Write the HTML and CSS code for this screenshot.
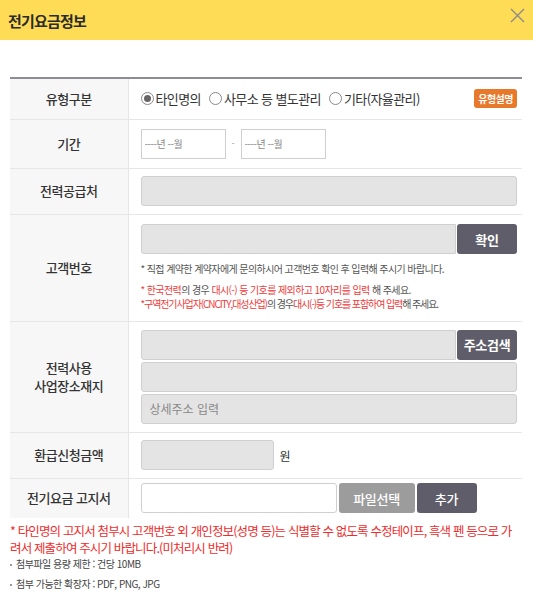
FILE: index.html
```html
<!DOCTYPE html>
<html lang="ko">
<head>
  <meta charset="UTF-8" />
  <meta name="viewport" content="width=device-width, initial-scale=1.0"/>
  <title>전기요금정보</title>
  <link rel="stylesheet" href="styles.css">
</head>
<body>

<!-- Popup header -->
<div class="pop-head">
  <h1>전기요금정보</h1>
  <button class="btn-close" type="button" aria-label="닫기">
    <svg width="15" height="15" viewBox="0 0 15 15"><path d="M1 1L14 14M14 1L1 14" stroke="#8a8a8a" stroke-width="1.4" fill="none"/></svg>
  </button>
</div>

<div class="pop-body">
  <table class="form-table">
    <colgroup>
      <col class="col-th">
      <col>
    </colgroup>
    <tr class="row-type">
      <th>유형구분</th>
      <td>
        <div class="type-line">
          <label class="radio"><span class="dot checked"></span>타인명의</label>
          <label class="radio"><span class="dot"></span>사무소 등 별도관리</label>
          <label class="radio"><span class="dot"></span>기타(자율관리)</label>
          <a class="badge" href="#">유형설명</a>
        </div>
      </td>
    </tr>
    <tr class="row-period">
      <th>기간</th>
      <td>
        <div class="period">
          <input class="inp-date" type="text" placeholder="----년 --월">
          <span class="sep">-</span>
          <input class="inp-date" type="text" placeholder="----년 --월">
        </div>
      </td>
    </tr>
    <tr class="row-std">
      <th>전력공급처</th>
      <td><input class="inp gray" type="text" readonly></td>
    </tr>
    <tr class="row-cust">
      <th>고객번호</th>
      <td>
        <div class="inp-btn">
          <input class="inp gray" type="text">
          <button class="btn dark" type="button">확인</button>
        </div>
        <p class="help">* 직접 계약한 계약자에게 문의하시어 고객번호 확인 후 입력해 주시기 바랍니다.</p>
        <p class="help first-red"><em>* 한국전력</em>의 경우 <em>대시(-) 등 기호를 제외하고 10자리를 입력</em> 해 주세요.</p>
        <p class="help tight"><em>*구역전기사업자(CNCITY,대성산업)</em>의 경우<em>대시(-)등 기호를 포함하여 입력</em>해 주세요.</p>
      </td>
    </tr>
    <tr class="row-addr">
      <th>전력사용<br>사업장소재지</th>
      <td>
        <div class="addr">
          <div class="inp-btn">
            <input class="inp gray" type="text" readonly>
            <button class="btn dark" type="button">주소검색</button>
          </div>
          <input class="inp gray" type="text" readonly>
          <input class="inp gray" type="text" placeholder="상세주소 입력">
        </div>
      </td>
    </tr>
    <tr class="row-std">
      <th>환급신청금액</th>
      <td>
        <div class="amount">
          <input class="inp gray short" type="text" readonly>
          <span>원</span>
        </div>
      </td>
    </tr>
    <tr class="row-file">
      <th>전기요금 고지서</th>
      <td>
        <div class="file">
          <input class="inp white" type="text" readonly>
          <button class="btn light" type="button">파일선택</button>
          <button class="btn dark add" type="button">추가</button>
        </div>
      </td>
    </tr>
  </table>

  <p class="warn">* 타인명의 고지서 첨부시 고객번호 외 개인정보(성명 등)는 식별할 수 없도록 수정테이프, 흑색 펜 등으로 가려서 제출하여 주시기 바랍니다.(미처리시 반려)</p>
  <ul class="notes">
    <li>첨부파일 용량 제한 : 건당 10MB</li>
    <li>첨부 가능한 확장자 : PDF, PNG, JPG</li>
  </ul>
</div>

</body>
</html>
```

FILE: styles.css
```css
* {
  box-sizing: border-box;
}
body {
  margin: 0;
  font-family: "Noto Sans CJK KR", "Noto Sans", sans-serif;
  color: #333;
  background: #fff;
}

/* header */
.pop-head {
  height: 40px;
  background: #ffdc55;
  display: flex;
  align-items: center;
  justify-content: space-between;
  padding: 0 8px 0 8px;
}
.pop-head h1 {
  margin: 0;
  font-size: 15px;
  font-weight: 700;
  letter-spacing: -0.8px;
  color: #2b2b2b;
}
.btn-close {
  border: none;
  background: none;
  padding: 0;
  width: 16px;
  height: 16px;
  margin-top: -8px;
  cursor: pointer;
}

.pop-body {
  padding: 37px 11px 0 10px;
}

/* form table */
.form-table {
  width: 512px;
  border-collapse: collapse;
  border-top: 2px solid #8c8c94;
}
.col-th {
  width: 118px;
}
.form-table th {
  background: #f7f7f7;
  border-right: 1px solid #e6e6e6;
  font-size: 13px;
  font-weight: 500;
  letter-spacing: -0.5px;
  line-height: 18px;
  color: #333;
  text-align: center;
  padding: 0;
}
.form-table td {
  padding: 0 5px 0 12px;
}
.form-table tr {
  border-bottom: 1px solid #e6e6e6;
}
.form-table tr.row-file {
  border-bottom: none;
}
.row-type { height: 41px; }
.row-period { height: 49px; }
.row-std { height: 46px; }
.row-cust { height: 107px; }
.row-addr { height: 111px; }
.row-file { height: 40px; }

/* radios */
.type-line {
  display: flex;
  align-items: center;
  font-size: 13px;
  letter-spacing: -0.6px;
  color: #333;
}
.radio {
  display: flex;
  align-items: center;
  margin-right: 8px;
}
.dot {
  width: 13px;
  height: 13px;
  border: 1px solid #8a8a8a;
  border-radius: 50%;
  margin-right: 2px;
  position: relative;
  background: #fff;
}
.dot.checked::after {
  content: "";
  position: absolute;
  left: 2px;
  top: 2px;
  width: 7px;
  height: 7px;
  border-radius: 50%;
  background: #666;
}
.badge {
  margin-left: auto;
  background: #e8782a;
  color: #fff;
  font-size: 10px;
  font-weight: 700;
  text-decoration: none;
  padding: 2px 4px;
  border-radius: 3px;
  letter-spacing: -0.5px;
}

/* period */
.period {
  display: flex;
  align-items: center;
}
.inp-date {
  width: 85px;
  height: 30px;
  border: 1px solid #cfcfcf;
  padding: 0 3px;
  font-family: inherit;
  font-size: 10px;
  letter-spacing: -0.5px;
}
.inp-date::placeholder {
  color: #888;
}
.sep {
  width: 15px;
  text-align: center;
  font-size: 9px;
  color: #999;
}

/* inputs and buttons */
.inp {
  display: block;
  width: 100%;
  height: 30px;
  border: 1px solid #cfcfcf;
  border-radius: 3px;
  font-family: inherit;
  font-size: 12px;
  padding: 0 8px;
}
.inp.gray {
  background: #e4e4e4;
}
.inp.white {
  background: #fff;
}
.inp::placeholder {
  color: #888;
}
.inp-btn {
  display: flex;
}
.inp-btn .inp {
  flex: 1;
  border-radius: 3px 0 0 3px;
}
.btn {
  height: 30px;
  border: none;
  border-radius: 3px;
  color: #fff;
  font-family: inherit;
  font-size: 13px;
  font-weight: 700;
  letter-spacing: -0.3px;
  cursor: pointer;
}
.btn.dark {
  background: #5e5d69;
}
.btn.light {
  background: #9c9c9c;
  font-weight: 500;
}
.inp-btn .btn {
  width: 60px;
  margin-left: 1px;
}

.help {
  margin: 8px 0 0;
  font-size: 10px;
  letter-spacing: -0.6px;
  color: #555;
  line-height: 14px;
}
.help em {
  font-style: normal;
  color: #f03a3a;
}
.help.first-red {
  margin-top: 7px;
}
.help.tight {
  margin-top: 0;
  letter-spacing: -1.1px;
}

.addr {
  display: flex;
  flex-direction: column;
  gap: 2px;
}

.amount {
  display: flex;
  align-items: center;
  font-size: 12px;
}
.inp.short {
  width: 133px;
  margin-right: 6px;
}

.file {
  display: flex;
  gap: 2px;
}
.file .inp {
  width: 196px;
}
.file .light {
  width: 76px;
}
.file .add {
  width: 60px;
  font-weight: 500;
}

/* notices */
.warn {
  margin: 4px 0 0;
  font-size: 12.5px;
  line-height: 17px;
  letter-spacing: -0.85px;
  color: #ef2b2b;
}
.notes {
  list-style: none;
  margin: -2px 0 0;
  padding: 0;
  font-size: 10px;
  line-height: 20px;
  letter-spacing: -0.5px;
  color: #444;
}
.notes li {
  position: relative;
  padding-left: 6px;
}
.notes li::before {
  content: "";
  position: absolute;
  left: 0;
  top: 10px;
  width: 2px;
  height: 2px;
  background: #999;
}
```
